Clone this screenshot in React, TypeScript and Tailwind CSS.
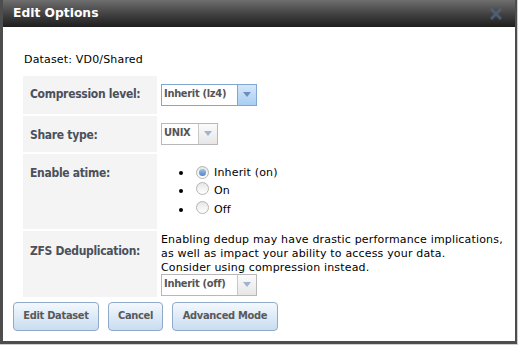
import React from "react";

const font = { fontFamily: '"DejaVu Sans", Verdana, sans-serif' };
const bold = { fontFamily: '"DejaVu Sans Condensed", "DejaVu Sans", Tahoma, sans-serif' };

const Select = ({ label, focused = false, width }: { label: string; focused?: boolean; width: string }) => (
  <div
    className={`flex h-[22px] items-stretch border bg-white ${width} ${
      focused ? "border-[#7fa7d1]" : "border-[#b8b8b8]"
    }`}
  >
    <div className="flex flex-1 items-center pl-[2px] text-[11px] font-bold tracking-[-0.3px] text-[#555]" style={bold}>
      {label}
    </div>
    <div
      className={`flex w-[19px] items-center justify-center border-l ${
        focused
          ? "border-[#7fa7d1] bg-gradient-to-b from-[#d6e7f9] to-[#a9cdf3]"
          : "border-[#c8c8c8] bg-gradient-to-b from-[#fbfbfb] to-[#e6e6e6]"
      }`}
    >
      <svg width="8" height="5" viewBox="0 0 8 5">
        <path d="M0 0 L8 0 L4 5 Z" fill={focused ? "#6d8fbf" : "#9db3cf"} />
      </svg>
    </div>
  </div>
);

const Radio = ({ checked = false }: { checked?: boolean }) => (
  <span className="inline-flex h-[13px] w-[13px] items-center justify-center rounded-full border border-[#b4b4b4] bg-gradient-to-b from-[#e6e6e6] to-[#ffffff]">
    {checked && <span className="h-[7px] w-[7px] rounded-full bg-gradient-to-b from-[#9fc2e6] to-[#4f86c6]" />}
  </span>
);

const Option = ({ label, checked = false }: { label: string; checked?: boolean }) => (
  <div className="flex h-[18.5px] items-center">
    <span className="ml-[18px] h-[4px] w-[4px] rounded-full bg-black" />
    <span className="ml-[13px]">
      <Radio checked={checked} />
    </span>
    <span className="ml-[5px]">{label}</span>
  </div>
);

const Button = ({ children, width }: { children: React.ReactNode; width: string }) => (
  <button
    className={`h-[29px] ${width} rounded-[4px] border border-[#8fabc9] bg-gradient-to-b from-[#f3f8fd] to-[#c9ddf1] text-[11px] font-bold tracking-[-0.3px] text-[#595959]`}
    style={bold}
  >
    {children}
  </button>
);

const Label = ({ children, top }: { children: React.ReactNode; top: string }) => (
  <div
    className={`w-[134px] shrink-0 whitespace-nowrap bg-[#f4f4f4] pl-[7px] ${top} text-[12px] font-bold tracking-[-0.3px] text-[#4b505b]`}
    style={bold}
  >
    {children}
  </div>
);

export default function App() {
  return (
    <div className="h-[345px] w-[518px] bg-[#cfcfcf]" style={font}>
      <div className="flex h-[344px] w-[517px] flex-col border-[3px] border-r-2 border-t-0 border-[#4d4d4d] bg-white">
        <div className="flex h-[27px] shrink-0 items-center justify-between bg-gradient-to-b from-[#6e6e6e] to-[#1e1e1e] pl-[10px] pr-[13px]">
          <span className="text-[12.3px] font-bold text-white">Edit Options</span>
          <svg width="12" height="12" viewBox="0 0 12 12" className="opacity-80">
            <path d="M2 2 L10 10 M10 2 L2 10" stroke="#51647f" strokeWidth="3" strokeLinecap="square" />
          </svg>
        </div>

        <div className="pl-[21px] pt-[25px] text-[11px] tracking-[0.17px] text-black">Dataset: VD0/Shared</div>

        <div className="mt-[7px] flex flex-col gap-[2px] pl-[20px] text-[11px] tracking-[0.17px] text-black">
          <div className="flex h-[38px] gap-[4px]">
            <Label top="pt-[9px]">Compression level:</Label>
            <div className="pt-[8px]">
              <Select label="Inherit (lz4)" focused width="w-[96px]" />
            </div>
          </div>

          <div className="flex h-[36px] gap-[4px]">
            <Label top="pt-[10px]">Share type:</Label>
            <div className="pt-[7px]">
              <Select label="UNIX" width="w-[57px]" />
            </div>
          </div>

          <div className="flex h-[75px] gap-[4px]">
            <Label top="pt-[10px]">Enable atime:</Label>
            <div className="pt-[10px]">
              <Option label="Inherit (on)" checked />
              <Option label="On" />
              <Option label="Off" />
            </div>
          </div>

          <div className="flex h-[66px] gap-[4px]">
            <Label top="pt-[11px]">ZFS Deduplication:</Label>
            <div className="pt-[2px]">
              <div className="leading-[14px]">
                Enabling dedup may have drastic performance implications,
                <br />
                as well as impact your ability to access your data.
                <br />
                Consider using compression instead.
              </div>
              <div className="-mt-[1px]">
                <Select label="Inherit (off)" width="w-[96px]" />
              </div>
            </div>
          </div>
        </div>

        <div className="flex gap-[9px] pl-[10px] pt-[5px]">
          <Button width="w-[86px]">Edit Dataset</Button>
          <Button width="w-[55px]">Cancel</Button>
          <Button width="w-[106px]">Advanced Mode</Button>
        </div>
      </div>
    </div>
  );
}
